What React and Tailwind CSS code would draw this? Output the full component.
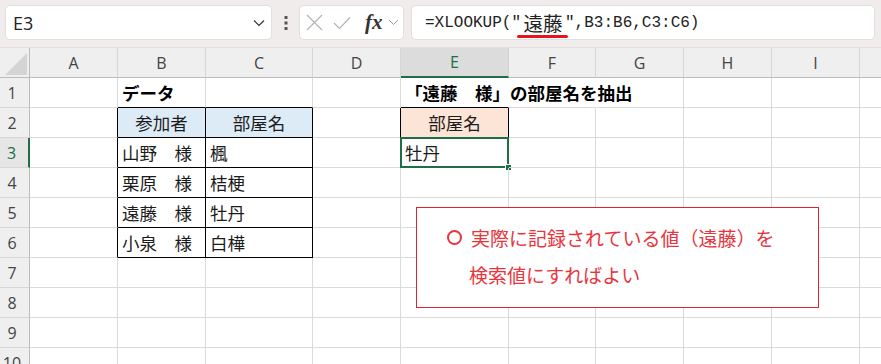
import React from "react";

const COLS = ["A", "B", "C", "D", "E", "F", "G", "H", "I", "J"];

const DATA = {
  1: { B: { t: "データ", bold: true }, E: { t: "「遠藤　様」の部屋名を抽出", bold: true } },
  2: {
    B: { t: "参加者", center: true, bg: "blue" },
    C: { t: "部屋名", center: true, bg: "blue" },
    E: { t: "部屋名", center: true, bg: "peach" },
  },
  3: { B: { t: "山野　様" }, C: { t: "楓" }, E: { t: "牡丹", sel: true } },
  4: { B: { t: "栗原　様" }, C: { t: "桔梗" } },
  5: { B: { t: "遠藤　様" }, C: { t: "牡丹" } },
  6: { B: { t: "小泉　様" }, C: { t: "白樺" } },
};

function rightCls(r, c) {
  const inTable = r >= 2 && r <= 6;
  if (inTable && (c === "A" || c === "B" || c === "C")) return "border-r-black";
  if (r === 2 && (c === "D" || c === "E")) return "border-r-black";
  if (r === 1 && (c === "E" || c === "F")) return "border-r-transparent";
  return "border-r-[#dadada]";
}

function bottomCls(r, c) {
  if ((c === "B" || c === "C") && r >= 1 && r <= 6) return "border-b-black";
  if (c === "E" && (r === 1 || r === 2)) return "border-b-black";
  return "border-b-[#dadada]";
}

function Cell({ r, c }) {
  const d = (DATA[r] && DATA[r][c]) || null;
  const bg = d && d.bg === "blue" ? "bg-[#ddebf7]" : d && d.bg === "peach" ? "bg-[#fce4d6]" : "";
  return (
    <div
      className={`relative flex items-center border-r border-b whitespace-nowrap overflow-visible text-[17.5px] text-[#1c1c1c] ${rightCls(r, c)} ${bottomCls(r, c)} ${bg} ${
        d && d.center ? "justify-center" : "pl-[4px]"
      } ${d && d.bold ? "font-bold text-black" : ""}`}
    >
      {d ? <span className="leading-none">{d.t}</span> : null}
      {d && d.sel ? (
        <div className="absolute left-[-1px] top-[-1px] right-[-1px] bottom-[-1px] border-2 border-[#1e6f43]">
          <div className="absolute right-[-5px] bottom-[-5px] w-[7px] h-[7px] bg-[#1e6f43] border border-white"></div>
        </div>
      ) : null}
    </div>
  );
}

export default function App() {
  const rows = [1, 2, 3, 4, 5, 6, 7, 8, 9, 10];
  return (
    <div className="w-[881px] h-[364px] overflow-hidden bg-white font-['Noto_Sans_CJK_JP',sans-serif]">
      {/* formula bar */}
      <div className="h-[48px] bg-[#f1ecec] flex items-start pt-[5px] pl-[5px] border-b border-[#e2dede]">
        <div className="w-[267px] h-[35px] rounded-[5px] bg-white border border-[#e3dfdf] flex items-center justify-between pl-[7px] pr-[6px]">
          <span className="font-['Open_Sans',sans-serif] text-[18px] text-[#222] leading-none">E3</span>
          <svg width="12" height="8" viewBox="0 0 12 8">
            <path d="M1 1.5 L6 6.5 L11 1.5" fill="none" stroke="#333" strokeWidth="1.2" />
          </svg>
        </div>
        <div className="w-[27px] h-[35px] flex items-center justify-center">
          <svg width="4" height="16" viewBox="0 0 4 16">
            <rect x="0.5" y="1" width="3" height="3" fill="#555" />
            <rect x="0.5" y="6.5" width="3" height="3" fill="#555" />
            <rect x="0.5" y="12" width="3" height="3" fill="#555" />
          </svg>
        </div>
        <div className="w-[105px] h-[35px] rounded-[5px] bg-white border border-[#e3dfdf] flex items-center pl-[6px]">
          <svg width="17" height="17" viewBox="0 0 17 17">
            <path d="M1 1 L16 16 M16 1 L1 16" stroke="#b4b4b4" strokeWidth="1.2" fill="none" />
          </svg>
          <svg width="18" height="14" viewBox="0 0 18 14" className="ml-[10px]">
            <path d="M1 7 L6.5 12.5 L17 1.5" stroke="#b4b4b4" strokeWidth="1.2" fill="none" />
          </svg>
          <span className="ml-[14px] font-['Liberation_Serif',serif] italic font-bold text-[21px] leading-none text-[#333]">
            fx
          </span>
          <svg width="11" height="7" viewBox="0 0 11 7" className="ml-[5px]">
            <path d="M1 1 L5.5 5.5 L10 1" fill="none" stroke="#999" strokeWidth="1" />
          </svg>
        </div>
        <div className="ml-[7px] w-[464px] h-[35px] rounded-[5px] bg-white border border-[#e3dfdf] flex items-center pl-[13px] font-['Liberation_Mono',monospace] text-[16px] text-[#222]">
          <span className="whitespace-pre">=XLOOKUP("</span>
          <span className="relative inline-block w-[44px] text-center text-[19.5px] leading-none font-['Noto_Sans_CJK_JP',sans-serif]">
            遠藤
            <span className="absolute left-[-4px] top-[22px] w-[51px] h-[3px] rounded-full bg-[#e8141c]"></span>
          </span>
          <span className="whitespace-pre">",B3:B6,C3:C6)</span>
        </div>
      </div>

      {/* grid */}
      <div className="relative w-max grid grid-cols-[30px_88px_88px_107px_88px_108px_87px_88px_88px_88px_88px] auto-rows-[30px]">
        {/* header row */}
        <div className="relative bg-[#efefef] border-r border-b border-r-[#bcbcbc] border-b-[#bcbcbc]">
          <svg width="30" height="30" viewBox="0 0 30 30" className="absolute left-0 top-0">
            <path d="M27 5 L27 27 L5 27 Z" fill="#d4d4d4" />
          </svg>
        </div>
        {COLS.map((c) =>
          c === "E" ? (
            <div
              key={c}
              className="flex items-center justify-center bg-[#dcdcdc] border-r border-r-[#d2d2d2] border-b-2 border-b-[#1e6f43] font-['Open_Sans',sans-serif] text-[16px] text-[#1e6f43]"
            >
              {c}
            </div>
          ) : (
            <div
              key={c}
              className="flex items-center justify-center bg-[#efefef] border-r border-b border-r-[#d6d6d6] border-b-[#bcbcbc] font-['Open_Sans',sans-serif] text-[16px] text-[#444]"
            >
              {c === "J" ? "" : c}
            </div>
          )
        )}

        {rows.map((r) => (
          <React.Fragment key={r}>
            {r === 3 ? (
              <div className="flex items-center justify-center pr-[5px] bg-[#e6e6e6] border-r-2 border-b border-r-[#1e6f43] border-b-[#d6d6d6] font-['Open_Sans',sans-serif] text-[16px] text-[#1e6f43]">
                {r}
              </div>
            ) : (
              <div className="flex items-center justify-center pr-[5px] bg-[#efefef] border-r border-b border-r-[#bcbcbc] border-b-[#d6d6d6] font-['Open_Sans',sans-serif] text-[16px] text-[#444]">
                {r}
              </div>
            )}
            {COLS.map((c) => (
              <Cell key={c} r={r} c={c} />
            ))}
          </React.Fragment>
        ))}

        {/* callout shape */}
        <div className="absolute left-[416px] top-[159px] w-[403px] h-[101px] bg-white border border-[#e0232b] pt-[11px] pl-[30px] text-[19px] leading-[37px] text-[#e8343c]">
          <div className="whitespace-nowrap flex items-center">
            <span className="inline-block w-[15px] h-[15px] rounded-full border-2 border-[#e8343c] mr-[9px]"></span>
            <span>実際に記録されている値（遠藤）を</span>
          </div>
          <div className="whitespace-nowrap pl-[22px]">検索値にすればよい</div>
        </div>
      </div>
    </div>
  );
}
